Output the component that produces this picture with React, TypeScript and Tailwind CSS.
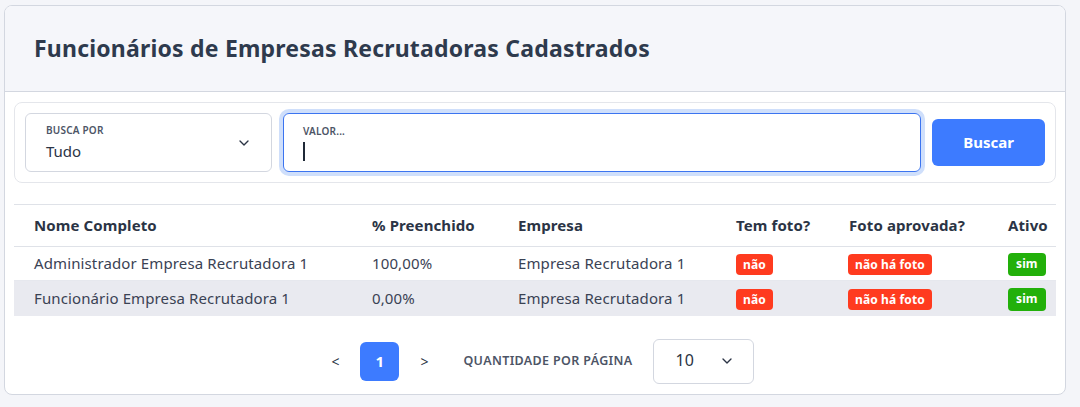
import { ChevronDown } from 'lucide-react';

type Row = {
  nome: string;
  preenchido: string;
  empresa: string;
  temFoto: boolean;
  fotoAprovada: string;
  ativo: boolean;
};

const rows: Row[] = [
  {
    nome: 'Administrador Empresa Recrutadora 1',
    preenchido: '100,00%',
    empresa: 'Empresa Recrutadora 1',
    temFoto: false,
    fotoAprovada: 'não há foto',
    ativo: true,
  },
  {
    nome: 'Funcionário Empresa Recrutadora 1',
    preenchido: '0,00%',
    empresa: 'Empresa Recrutadora 1',
    temFoto: false,
    fotoAprovada: 'não há foto',
    ativo: true,
  },
];

const Badge = ({ children, tone }: { children: React.ReactNode; tone: 'red' | 'green' }) => (
  <span
    className={
      tone === 'red'
        ? 'inline-flex h-[21px] items-center rounded-[4px] bg-[#ff3b1f] px-[7px] text-[12px] font-bold text-white'
        : 'inline-flex h-[23px] items-center rounded-[4px] bg-[#22b00a] px-[8px] text-[12px] font-bold text-white'
    }
  >
    {children}
  </span>
);

const FuncionariosTable = () => (
  <table className="w-full table-fixed border-collapse text-left">
    <colgroup>
      <col className="w-[338px]" />
      <col className="w-[146px]" />
      <col className="w-[218px]" />
      <col className="w-[113px]" />
      <col className="w-[159px]" />
      <col />
    </colgroup>
    <thead>
      <tr className="h-[42px] border-t border-b border-[#dfe2e8] text-[15px] font-bold tracking-[0.1px] text-[#2b3445]">
        <th className="pl-[20px]">Nome Completo</th>
        <th className="pl-[20px]">% Preenchido</th>
        <th className="pl-[20px]">Empresa</th>
        <th className="pl-[20px]">Tem foto?</th>
        <th className="pl-[20px]">Foto aprovada?</th>
        <th className="pl-[20px]">Ativo</th>
      </tr>
    </thead>
    <tbody>
      {rows.map((row, i) => (
        <tr
          key={row.nome}
          className={
            i % 2 === 1
              ? 'h-[35px] bg-[#e9eaf0] text-[15px] tracking-[0.12px] text-[#3a4254]'
              : 'h-[34px] border-b border-[#e6e8ee] text-[15px] tracking-[0.12px] text-[#3a4254]'
          }
        >
          <td className="pl-[20px]">{row.nome}</td>
          <td className="pl-[20px]">{row.preenchido}</td>
          <td className="pl-[20px]">{row.empresa}</td>
          <td className="pl-[20px]">
            <Badge tone="red">{row.temFoto ? 'sim' : 'não'}</Badge>
          </td>
          <td className="pl-[19px]">
            <Badge tone="red">{row.fotoAprovada}</Badge>
          </td>
          <td className="pl-[20px]">
            <Badge tone="green">{row.ativo ? 'sim' : 'não'}</Badge>
          </td>
        </tr>
      ))}
    </tbody>
  </table>
);

export default function App() {
  return (
    <div className="min-h-[407px] bg-[#f4f5f9] pt-[5px] pl-[4px] pr-[14px] font-['Noto_Sans',sans-serif]">
      <div className="overflow-hidden rounded-[8px] border border-[#d3d7e0] bg-white">
        <div className="flex h-[86px] items-center border-b border-[#d3d7e0] bg-[#f5f6fa] px-[29px]">
          <h1 className="text-[23px] font-bold tracking-[0.2px] text-[#2e3a4d]">
            Funcionários de Empresas Recrutadoras Cadastrados
          </h1>
        </div>

        <div className="px-[9px] pt-[10px] pb-[10px]">
          <div className="flex items-center gap-[11px] rounded-[8px] border border-[#e4e6eb] p-[10px]">
            <div className="flex h-[59px] w-[247px] items-center justify-between rounded-[6px] border border-[#d3d7e0] pl-[20px] pr-[19px]">
              <div className="flex flex-col">
                <span className="text-[10px] font-semibold uppercase tracking-[0.2px] text-[#4d5566]">Busca por</span>
                <span className="mt-[2px] text-[15px] text-[#2b3445]">Tudo</span>
              </div>
              <ChevronDown className="h-[16px] w-[16px] text-[#2b3445]" strokeWidth={2} />
            </div>

            <div className="flex h-[59px] flex-1 flex-col justify-center rounded-[6px] border border-[#3b74f0] pl-[19px] ring-[4px] ring-[#cfdffb]">
              <span className="text-[10px] font-semibold uppercase tracking-[0.2px] text-[#4d5566]">Valor...</span>
              <span className="mt-[3px] h-[19px] w-[1.5px] bg-[#1f2937]" />
            </div>

            <button className="h-[47px] w-[113px] rounded-[6px] bg-[#3d7bff] text-[15px] font-bold text-white">
              Buscar
            </button>
          </div>

          <div className="mt-[21px]">
            <FuncionariosTable />
          </div>

          <div className="mt-[23px] flex items-center justify-center pl-[15px]">
            <span className="text-[14px] text-[#2b3445]">&lt;</span>
            <span className="ml-[21px] flex h-[39px] w-[39px] items-center justify-center rounded-[6px] bg-[#3d7bff] text-[15px] font-bold text-white">
              1
            </span>
            <span className="ml-[21px] text-[14px] text-[#2b3445]">&gt;</span>
            <span className="ml-[35px] text-[12.5px] font-semibold uppercase tracking-[0.35px] text-[#4d5566]">
              Quantidade por página
            </span>
            <div className="ml-[20px] flex h-[45px] w-[101px] items-center justify-between rounded-[6px] border border-[#d3d7e0] pl-[22px] pr-[18px]">
              <span className="-mt-[3px] text-[16px] text-[#2b3445]">10</span>
              <ChevronDown className="h-[16px] w-[16px] text-[#2b3445]" strokeWidth={2} />
            </div>
          </div>
        </div>
      </div>
    </div>
  );
}
